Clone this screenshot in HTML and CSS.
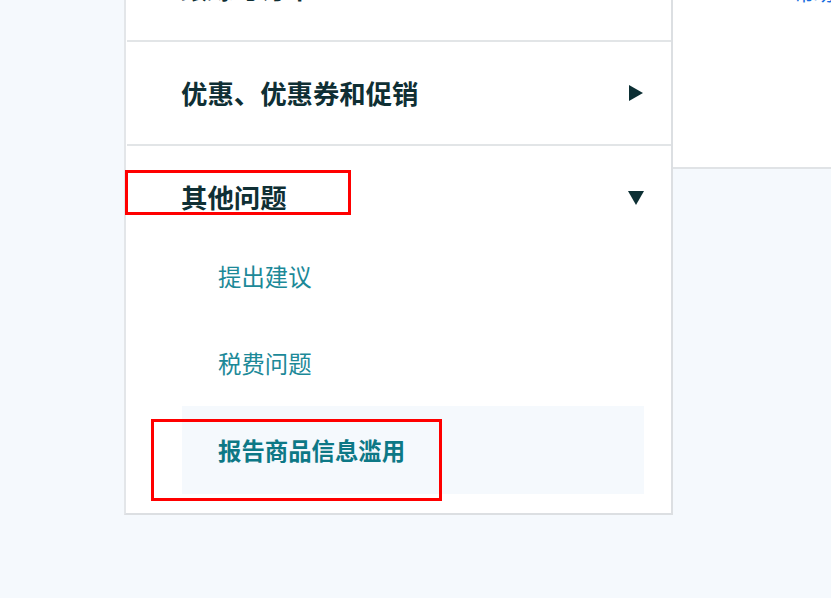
FILE: index.html
```html
<!DOCTYPE html>
<html lang="zh-CN">
<head>
<meta charset="utf-8">
<title>帮助</title>
<link rel="stylesheet" href="styles.css">
</head>
<body>
<div class="page">
  <nav class="sidebar">
    <div class="row-top"><span class="cut-text">跟踪与订单</span></div>
    <div class="divider"></div>
    <div class="group-head">
      <span class="head-text">优惠、优惠券和促销</span>
      <svg class="tri" width="14" height="16" viewBox="0 0 14 16"><path d="M0 0 L14 8 L0 16 Z" fill="#0c2f34"/></svg>
    </div>
    <div class="divider"></div>
    <div class="group-head open">
      <span class="head-text">其他问题</span>
      <svg class="tri" width="16" height="14" viewBox="0 0 16 14"><path d="M0 0 L16 0 L8 14 Z" fill="#0c2f34"/></svg>
    </div>
    <ul class="sub-list">
      <li class="sub-item">提出建议</li>
      <li class="sub-item">税费问题</li>
      <li class="sub-item active">报告商品信息滥用</li>
    </ul>
    <div class="mark mark-one"></div>
    <div class="mark mark-two"></div>
  </nav>
  <aside class="side-panel">
    <span class="link-cut">帮助中心</span>
  </aside>
</div>
</body>
</html>
```

FILE: styles.css
```css
* { box-sizing: border-box; }
html, body { margin: 0; padding: 0; }
body {
  background: #f5f9fd;
  font-family: "Noto Sans CJK SC", "Noto Sans", sans-serif;
  width: 831px;
  height: 598px;
  overflow: hidden;
}
.page {
  display: flex;
  align-items: flex-start;
  padding-left: 124px;
}
.sidebar {
  position: relative;
  width: 549px;
  background: #ffffff;
  border-left: 2px solid #e3e6e9;
  border-right: 2px solid #dcdfe2;
  border-bottom: 2px solid #dcdfe2;
  padding-bottom: 19px;
}
.row-top {
  height: 40px;
  overflow: hidden;
  padding-left: 55px;
}
.cut-text {
  display: block;
  margin-top: -30px;
  font-size: 26.4px;
  line-height: 36px;
  font-weight: 700;
  color: #0f2f34;
  white-space: nowrap;
}
.divider {
  height: 2px;
  background: #e2e5e7;
  margin-left: 1px;
}
.group-head {
  height: 102px;
  display: flex;
  align-items: center;
  justify-content: space-between;
  padding-left: 55px;
  padding-right: 28px;
}
.group-head.open {
  height: 86px;
  align-items: flex-start;
  padding-top: 33px;
}
.head-text {
  font-size: 26.4px;
  line-height: 36px;
  font-weight: 700;
  color: #0f2f34;
}
.group-head.open .tri { margin-top: 12px; margin-right: -1px; }
.sub-list {
  list-style: none;
  margin: 0 27px 0 56px;
  padding: 0;
}
.sub-item {
  height: 87px;
  display: flex;
  align-items: center;
  padding-left: 36px;
  font-size: 23.4px;
  color: #1c8998;
}
.sub-item.active {
  height: 88px;
  background: #f5f9fd;
  font-weight: 700;
  color: #0d7886;
}
.mark {
  position: absolute;
  border: 3px solid #ff0000;
}
.mark-one {
  left: -1px;
  top: 170px;
  width: 226px;
  height: 45px;
}
.mark-two {
  left: 25px;
  top: 419px;
  width: 291px;
  height: 82px;
}
.side-panel {
  flex: 1;
  height: 169px;
  background: #ffffff;
  border-bottom: 2px solid #e0e3e6;
  overflow: hidden;
  padding-left: 121px;
}
.link-cut {
  display: block;
  margin-top: -17px;
  font-size: 20px;
  line-height: 20px;
  color: #1a6fe0;
  white-space: nowrap;
}
```
